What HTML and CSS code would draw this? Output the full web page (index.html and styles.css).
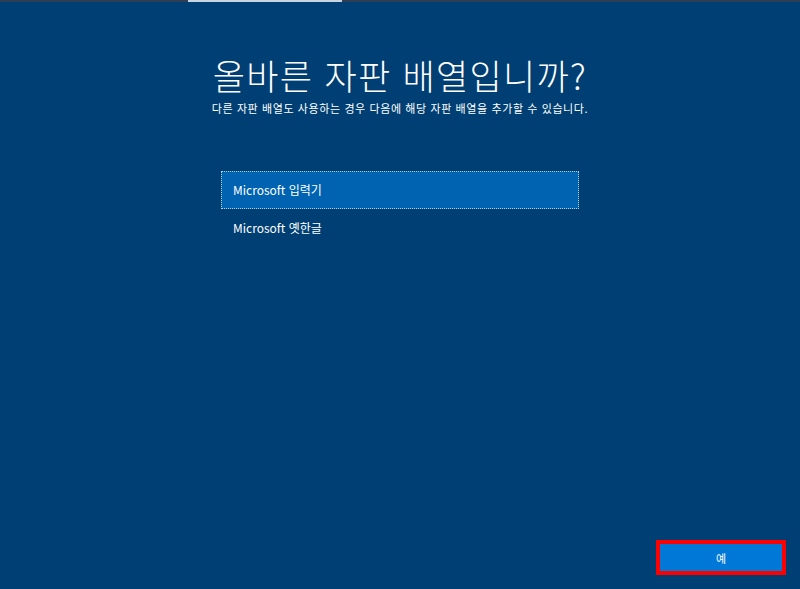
FILE: index.html
```html
<!DOCTYPE html>
<html lang="ko">
<head>
    <meta charset="UTF-8">
    <title>자판 배열</title>
    <link rel="stylesheet" href="styles.css">
</head>
<body>
    <div class="progress">
        <div class="progress-done"></div>
    </div>
    <div class="page">
        <h1 class="title">올바른 자판 배열입니까?</h1>
        <p class="subtitle">다른 자판 배열도 사용하는 경우 다음에 해당 자판 배열을 추가할 수 있습니다.</p>
        <ul class="layouts">
            <li class="layout selected">Microsoft 입력기</li>
            <li class="layout">Microsoft 옛한글</li>
        </ul>
    </div>
    <div class="footer">
        <button class="yes-btn">예</button>
    </div>
</body>
</html>
```

FILE: styles.css
```css
body, html {
    margin: 0;
    padding: 0;
    height: 100%;
    background-color: #003f73;
    font-family: "Noto Sans CJK KR", "Noto Sans", sans-serif;
    color: #ffffff;
    overflow: hidden;
}
body {
    display: flex;
    flex-direction: column;
}
.progress {
    height: 2px;
    background-color: #2e3f55;
    padding-left: 188px;
}
.progress-done {
    width: 154px;
    height: 2px;
    background-color: #c8d4e2;
}
.page {
    flex: 1;
    display: flex;
    flex-direction: column;
    align-items: center;
}
.title {
    margin: 48px 0 0;
    font-size: 35px;
    font-weight: 300;
    line-height: 50px;
    letter-spacing: 1.3px;
}
.subtitle {
    margin: 0;
    font-size: 11px;
    line-height: 16px;
    letter-spacing: 0.6px;
}
.layouts {
    list-style: none;
    margin: 55px 0 0;
    padding: 0;
    width: 358px;
}
.layout {
    height: 38px;
    line-height: 36px;
    padding-left: 11px;
    font-size: 12px;
    border: 1px solid transparent;
    box-sizing: border-box;
}
.layout.selected {
    background-color: #0063b1;
    border: 1px dotted #b8cbe0;
}
.footer {
    display: flex;
    justify-content: flex-end;
    padding: 0 14px 14px 0;
}
.yes-btn {
    width: 130px;
    height: 35px;
    border: 4px solid #ff0000;
    background-color: #0078d7;
    color: #ffffff;
    font-family: "Noto Sans CJK KR", sans-serif;
    font-size: 11px;
    padding: 0;
}
```
